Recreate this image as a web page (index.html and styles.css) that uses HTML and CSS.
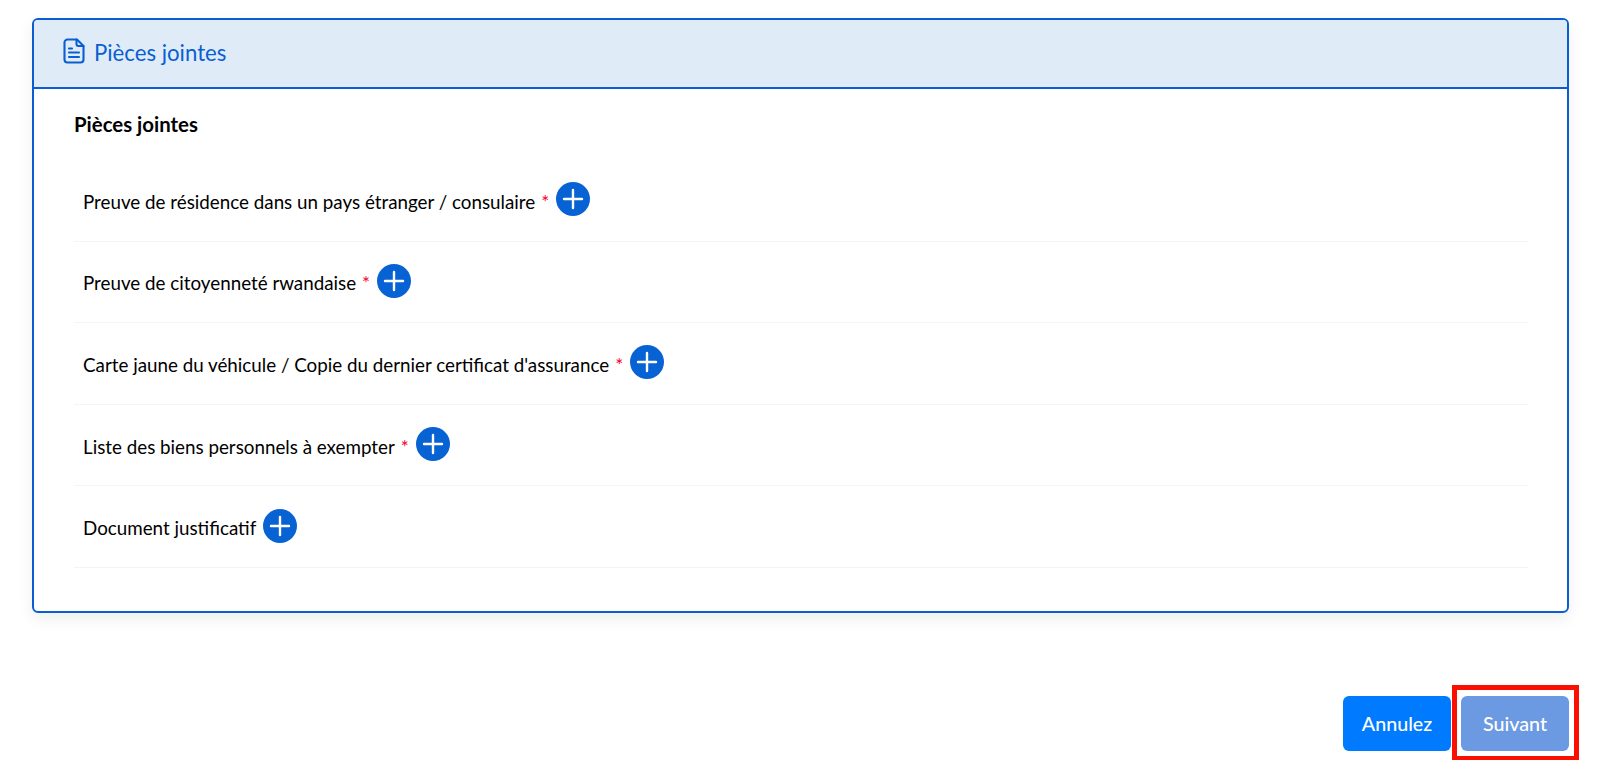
FILE: index.html
```html
<!DOCTYPE html>
<html lang="fr">
<head>
<meta charset="utf-8">
<title>Pièces jointes</title>
<link rel="stylesheet" href="styles.css">
</head>
<body>
<main class="page">
  <section class="card">
    <header class="card-header">
      <svg class="doc-icon" viewBox="0 0 22 26" width="22" height="26" fill="none" stroke="currentColor" stroke-width="2.1" stroke-linecap="round" stroke-linejoin="round" aria-hidden="true">
        <path d="M14 1.5H4.5A3 3 0 0 0 1.5 4.500v17a3 3 0 0 0 3 3h13a3 3 0 0 0 3-3V8z"/>
        <path d="M13.500 1.500v4.500a2 2 0 0 0 2 2h5"/>
        <path d="M6 10.500h3M6 14.500h10M6 19h10"/>
      </svg>
      <span>Pièces jointes</span>
    </header>
    <div class="card-body">
      <h2 class="section-title">Pièces jointes</h2>
      <div class="row"><span class="label">Preuve de résidence dans un pays étranger / consulaire</span><span class="req">*</span><button class="add" type="button" aria-label="Ajouter"><svg viewBox="0 0 34 34" width="34" height="34"><path d="M17 8v18M8 17h18"/></svg></button></div>
      <div class="row"><span class="label">Preuve de citoyenneté rwandaise</span><span class="req">*</span><button class="add" type="button" aria-label="Ajouter"><svg viewBox="0 0 34 34" width="34" height="34"><path d="M17 8v18M8 17h18"/></svg></button></div>
      <div class="row"><span class="label">Carte jaune du véhicule / Copie du dernier certificat d'assurance</span><span class="req">*</span><button class="add" type="button" aria-label="Ajouter"><svg viewBox="0 0 34 34" width="34" height="34"><path d="M17 8v18M8 17h18"/></svg></button></div>
      <div class="row"><span class="label">Liste des biens personnels à exempter</span><span class="req">*</span><button class="add" type="button" aria-label="Ajouter"><svg viewBox="0 0 34 34" width="34" height="34"><path d="M17 8v18M8 17h18"/></svg></button></div>
      <div class="row"><span class="label">Document justificatif</span><button class="add" type="button" aria-label="Ajouter"><svg viewBox="0 0 34 34" width="34" height="34"><path d="M17 8v18M8 17h18"/></svg></button></div>
    </div>
  </section>
  <footer class="actions">
    <button class="btn btn-cancel" type="button">Annulez</button>
    <span class="highlight"><button class="btn btn-next" type="button">Suivant</button></span>
  </footer>
</main>
</body>
</html>
```
FILE: styles.css
```css
* { box-sizing: border-box; }
html, body { margin: 0; height: 760px; overflow: hidden; background: #fff; }
body { font-family: "Lato", "Noto Sans", sans-serif; color: #000; }
.page { padding: 18px 31px 0 32px; }
.card {
  height: 595px;
  border: 2px solid #0a5ed2;
  border-radius: 6px;
  box-shadow: 0 6px 16px rgba(0, 0, 0, .07);
  overflow: hidden;
  background: #fff;
}
.card-header {
  height: 69px;
  display: flex;
  align-items: center;
  gap: 9px;
  padding: 0 0 2px 29px;
  background: #dfecf8;
  border-bottom: 2px solid #0a5ed2;
  color: #0a5ed2;
  font-size: 22.2px;
}
.doc-icon { flex: none; margin-top: -3px; }
.card-body { padding: 0 39px 0 40px; }
.section-title { margin: 0; padding-top: 23px; height: 71px; font-size: 20.400px; font-weight: 700; line-height: 24px; }
.row {
  height: 81.6px;
  display: flex;
  align-items: center;
  padding-left: 9px;
  padding-top: 2px;
  border-bottom: 1px solid #f4f4f4;
  font-size: 18.8px;
}
.req { color: #f5002d; margin-left: 6px; }
.add {
  width: 34px; height: 34px; margin: -4px 0 0 7px; padding: 0;
  border: 0; border-radius: 50%; background: #0763d4; display: block;
}
.add svg { display: block; fill: none; stroke: #fff; stroke-width: 2.4; stroke-linecap: round; }
.actions { display: flex; justify-content: flex-end; gap: 10px; margin-top: 83px; }
.btn {
  width: 108px; height: 55px;
  border: 0; border-radius: 6px;
  color: #fff; font: 500 19.700px "Lato", sans-serif;
}
.btn-cancel { background: #007bff; }
.btn-next { background: #6c9ae2; display: block; }
.highlight { position: relative; display: block; }
.highlight::after {
  content: "";
  position: absolute;
  inset: -11px -10px -10px -9px;
  border: 5px solid #fb0f00;
  pointer-events: none;
}
```
